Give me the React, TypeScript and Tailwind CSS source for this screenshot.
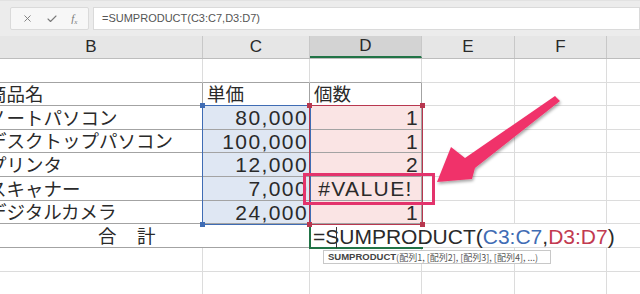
import React from 'react'
import { X, Check } from 'lucide-react'

const jp = "font-['Noto_Sans_CJK_JP',sans-serif]"
const num = "font-['Liberation_Sans',Arial,sans-serif] text-[21px] tracking-[1.4px] leading-none"

const light = 'border-[#dcdcdc]'
const dark = 'border-[#a3a3a3]'

type Row = {
  h: string
  name?: string
  price?: string
  qty?: string
  kind: 'blank-top' | 'head' | 'data' | 'total' | 'blank'
}

const rows: Row[] = [
  { h: 'h-[24px]', kind: 'blank-top' },
  { h: 'h-[23px]', kind: 'head', name: '商品名', price: '単価', qty: '個数' },
  { h: 'h-[24px]', kind: 'data', name: 'ノートパソコン', price: '80,000', qty: '1' },
  { h: 'h-[23px]', kind: 'data', name: 'デスクトップパソコン', price: '100,000', qty: '1' },
  { h: 'h-[24px]', kind: 'data', name: 'プリンタ', price: '12,000', qty: '2' },
  { h: 'h-[24px]', kind: 'data', name: 'スキャナー', price: '7,000', qty: '#VALUE!' },
  { h: 'h-[23px]', kind: 'data', name: 'デジタルカメラ', price: '24,000', qty: '1' },
  { h: 'h-[24px]', kind: 'total' },
  { h: 'h-[24px]', kind: 'blank' },
  { h: 'h-[24px]', kind: 'blank' },
]

const GridRow = ({ row }: { row: Row }) => {
  const bottom = row.kind === 'blank' ? light : dark

  if (row.kind === 'total') {
    return (
      <div className={`flex ${row.h}`}>
        <div className={`-ml-[16px] w-[326px] shrink-0 border-b ${dark} flex items-center pl-[114px] ${jp} text-[18.5px] tracking-[1px] text-[#2a2a2a]`}>
          合　計
        </div>
        <div className={`relative w-[112px] shrink-0 border-b ${dark}`}>
          <div className="absolute left-[3px] top-[1px] z-10 flex h-[22px] items-center whitespace-nowrap font-['Liberation_Sans',Arial,sans-serif] text-[21px] leading-none text-[#2a2a2a]">
            =SUMPRODUCT(<span className="text-[#3f6cb4]">C3:C7</span>,<span className="text-[#c23a50]">D3:D7</span>)
          </div>
        </div>
        <div className={`w-[93px] shrink-0 border-b ${light}`} />
        <div className={`w-[92px] shrink-0 border-b ${light}`} />
        <div className={`flex-1 border-b ${light}`} />
      </div>
    )
  }

  return (
    <div className={`flex ${row.h}`}>
      <div className={`-ml-[16px] w-[219px] shrink-0 border-b border-r ${bottom} ${row.kind === 'blank-top' ? 'border-r-[#dcdcdc]' : ''} flex items-center overflow-hidden whitespace-nowrap pl-[4px] ${jp} text-[18.5px] text-[#2a2a2a]`}>
        {row.name}
      </div>
      <div
        className={`w-[107px] shrink-0 border-b border-r ${bottom} ${row.kind === 'blank-top' ? 'border-r-[#dcdcdc]' : ''} ${row.kind === 'data' ? 'bg-[#dfe7f3] justify-end pr-[1px]' : 'pl-[4px]'} flex items-center text-[#2a2a2a] ${row.kind === 'data' ? num : `${jp} text-[18.5px]`}`}
      >
        {row.price}
      </div>
      <div
        className={`w-[112px] shrink-0 border-b border-r ${bottom} ${row.kind === 'blank-top' ? 'border-r-[#dcdcdc]' : ''} ${row.kind === 'data' ? 'bg-[#fae4e4]' : ''} ${row.kind === 'data' && row.qty !== '#VALUE!' ? 'justify-end pr-[2px]' : ''} ${row.qty === '#VALUE!' ? 'justify-center' : ''} ${row.kind === 'head' ? 'pl-[4px]' : ''} flex items-center text-[#2a2a2a] ${row.kind === 'data' ? num : `${jp} text-[18.5px]`}`}
      >
        {row.qty}
      </div>
      <div className={`w-[93px] shrink-0 border-b border-r ${light}`} />
      <div className={`w-[92px] shrink-0 border-b border-r ${light}`} />
      <div className={`flex-1 border-b ${light}`} />
    </div>
  )
}

export default function App() {
  return (
    <div className="relative h-[294px] w-[640px] overflow-hidden bg-white">
      {/* formula bar */}
      <div className="flex h-[36px] items-start gap-[4px] border-t border-[#e2e2e2] bg-[#ececec] pl-[10px] pt-[6px]">
        <div className="flex h-[23px] w-[79px] items-center justify-around rounded-[2px] border border-[#dadada] bg-[#f7f7f7] px-[4px] text-[#7a7a7a]">
          <X size={11} strokeWidth={2} />
          <Check size={12} strokeWidth={2.2} />
          <span className="font-['Liberation_Serif',serif] text-[11px] italic leading-none">
            f<sub className="text-[7px]">x</sub>
          </span>
        </div>
        <div className="flex h-[23px] flex-1 items-center border border-[#dadada] bg-white pl-[8px] font-['Liberation_Sans',Arial,sans-serif] text-[11px] text-[#555]">
          =SUMPRODUCT(C3:C7,D3:D7)
        </div>
      </div>

      {/* column headers */}
      <div className="flex h-[23px] border-b border-[#bdbdbd] bg-[#e6e6e6] font-['Liberation_Sans',Arial,sans-serif] text-[17px] text-[#2a2a2a]">
        <div className="-ml-[16px] flex w-[219px] shrink-0 items-center justify-center border-r border-[#c8c8c8] pr-[4px]">B</div>
        <div className="flex w-[107px] shrink-0 items-center justify-center border-r border-[#c8c8c8]">C</div>
        <div className="flex w-[112px] shrink-0 items-center justify-center border-b-2 border-r border-b-[#217346] border-r-[#c8c8c8] bg-[#d3d3d3]">D</div>
        <div className="flex w-[93px] shrink-0 items-center justify-center border-r border-[#c8c8c8]">E</div>
        <div className="flex w-[92px] shrink-0 items-center justify-center border-r border-[#c8c8c8]">F</div>
        <div className="flex-1" />
      </div>

      {/* grid */}
      <div>
        {rows.map((row, i) => (
          <GridRow key={i} row={row} />
        ))}
      </div>

      {/* selection ranges */}
      <div className="absolute left-[202px] top-[105px] h-[120px] w-[109px] border-[1.5px] border-[#3f6cb4]" />
      <div className="absolute left-[309px] top-[105px] h-[120px] w-[114px] border-[1.5px] border-[#b8374f]" />
      <div className="absolute left-[309px] top-[224px] h-[25px] w-[114px] border-b-2 border-l-2 border-[#217346]" />
      <div className="absolute left-[200px] top-[103px] h-[5px] w-[5px] bg-[#3f6cb4]" />
      <div className="absolute left-[200px] top-[222px] h-[5px] w-[5px] bg-[#3f6cb4]" />
      <div className="absolute left-[307px] top-[103px] h-[5px] w-[5px] bg-[#b8374f]" />
      <div className="absolute left-[420px] top-[103px] h-[5px] w-[5px] bg-[#b8374f]" />
      <div className="absolute left-[307px] top-[222px] h-[5px] w-[5px] bg-[#b8374f]" />
      <div className="absolute left-[420px] top-[222px] h-[5px] w-[5px] bg-[#b8374f]" />

      {/* text cursor */}
      <div className="absolute left-[336px] top-[227px] z-20 h-[21px] w-px bg-[#333]" />

      {/* callout box */}
      <div className="absolute left-[303px] top-[173px] h-[32px] w-[132px] border-[3px] border-[#e3336c]" />

      {/* arrow */}
      <svg className="absolute left-0 top-0 z-30" width="640" height="294" viewBox="0 0 640 294">
        <defs>
          <filter id="sh" x="-20%" y="-20%" width="140%" height="140%">
            <feDropShadow dx="1" dy="2" stdDeviation="1.5" floodColor="#000" floodOpacity="0.35" />
          </filter>
        </defs>
        <polygon
          points="555,96 560,101 475,168 472,179 437,182 451,147 465,158"
          fill="#f0336b"
          filter="url(#sh)"
        />
      </svg>

      {/* function tooltip */}
      <div className="absolute left-[323px] top-[250px] z-20 flex h-[14px] w-[228px] items-center whitespace-nowrap border border-[#c8c8c8] bg-white pl-[4px] font-['Liberation_Sans',Arial,sans-serif] text-[9.5px] leading-none text-[#555]">
        <span className="font-bold text-[#444]">SUMPRODUCT</span>
        <span className="font-['Noto_Sans_CJK_JP',sans-serif] text-[9px]">(配列1, [配列2], [配列3], [配列4], ...)</span>
      </div>
    </div>
  )
}
